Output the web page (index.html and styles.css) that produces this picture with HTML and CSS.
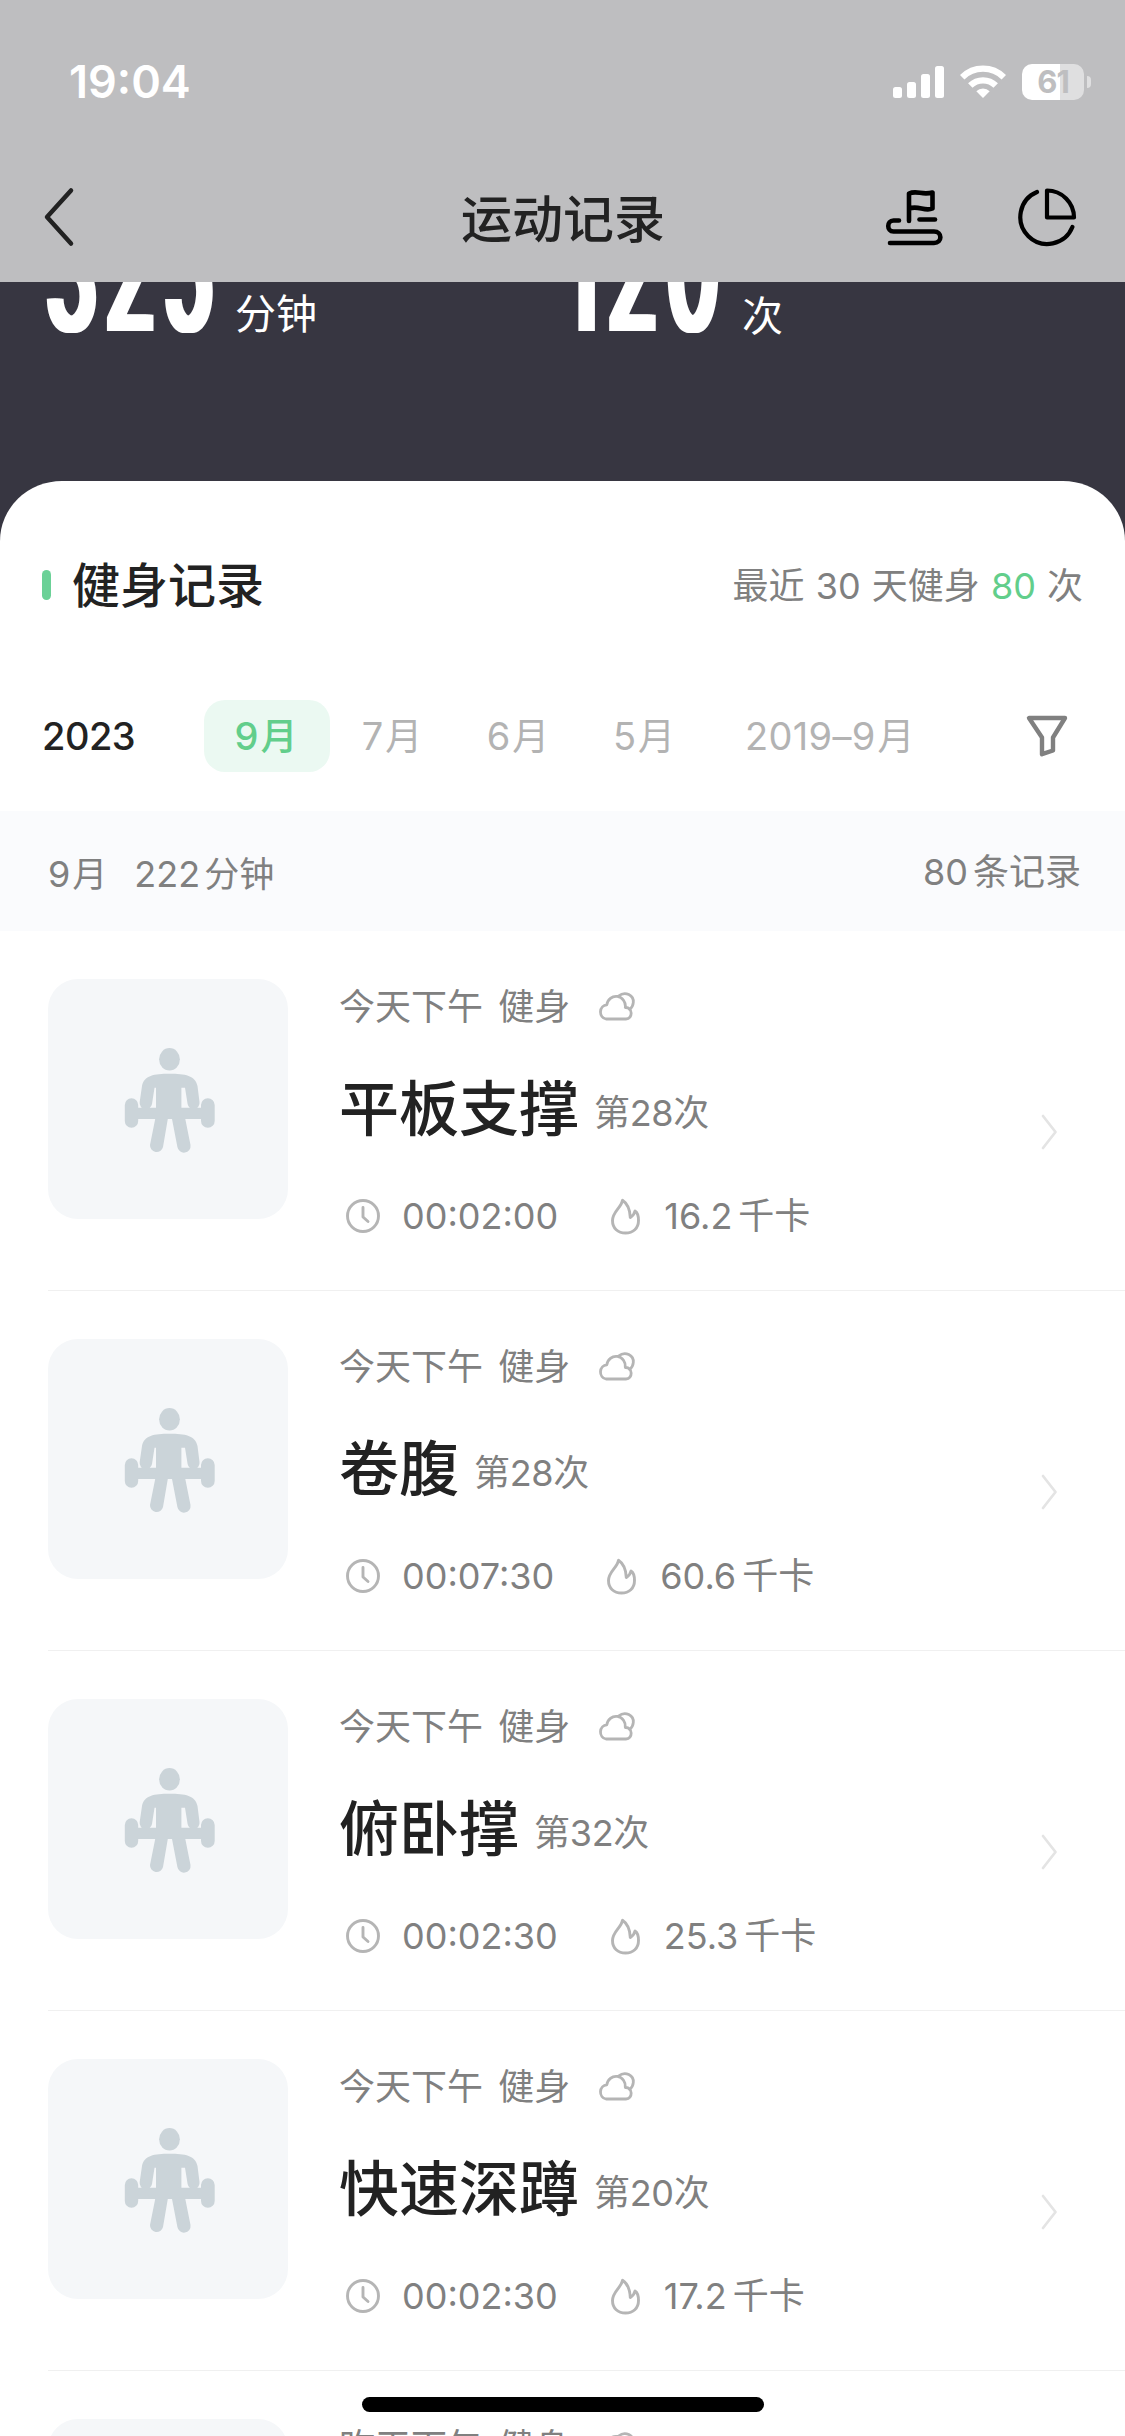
FILE: index.html
```html
<!DOCTYPE html>
<html lang="zh-CN">
<head>
<meta charset="utf-8">
<title>运动记录</title>
<link rel="stylesheet" href="styles.css">
</head>
<body>
<svg class="defs" aria-hidden="true">
  <symbol id="athlete" viewBox="0 0 240 240">
    <g fill="#cbd4d9">
      <ellipse cx="121.5" cy="80.3" rx="10.4" ry="11.2"/>
      <path d="M121.500 94.700C137 94.700 147.500 96.500 149.500 107L151.500 123A6 6 0 0 1 139.600 125L137 108.800H133.400V128.700H153V126A6.800 6.800 0 0 1 166.700 126V142A6.800 6.800 0 0 1 153 142V140H137.300L142.500 166A6.600 6.600 0 0 1 129.400 168L124 140H119.800L115 168A6.600 6.600 0 0 1 102 166L107.200 140H90.200V142A6.700 6.700 0 0 1 76.800 142V126A6.700 6.700 0 0 1 90.200 126V128.700H108V108.800H106.500L104 125A6.200 6.200 0 0 1 91.700 123L94 107C96 96.500 106 94.700 121.500 94.700Z"/>
    </g>
  </symbol>
  <symbol id="cloud" viewBox="0 0 42 36">
    <g fill="none" stroke="#b5b5b5" stroke-width="2.8" stroke-linecap="round" stroke-linejoin="round">
      <path d="M10 30A7 7.200 0 0 1 10.800 15.800A9.300 9.800 0 1 1 29.300 18.500C37 18 37 30 30 30Z"/>
      <path d="M22.500 7C29.500 1.500 38 6.500 37.300 13.500C37.100 16.500 35.500 19 33.500 20.300"/>
    </g>
  </symbol>
  <symbol id="clock" viewBox="0 0 36 36">
    <g fill="none" stroke="#b5b5b5" stroke-width="2.9" stroke-linecap="round" stroke-linejoin="round">
      <circle cx="18" cy="18" r="15.500"/>
      <path d="M18 9.500V19L23 23.500"/>
    </g>
  </symbol>
  <symbol id="flame" viewBox="0 0 36 42">
    <path d="M14.500 5.200C13.500 12.500 4.500 16.500 4.500 25.500C4.500 33.500 10 38 17.500 38S30.500 33.500 30.500 25.500C30.500 20.500 29.500 17.500 27 16C26.500 19 24.500 21 22.300 22.500C22 15 19.500 8.500 14.500 5.200Z" fill="none" stroke="#b5b5b5" stroke-width="2.900" stroke-linejoin="round"/>
  </symbol>
  <symbol id="chevron" viewBox="0 0 20 38">
    <path d="M4 3L16.500 19L4 35" fill="none" stroke="#e4e4e4" stroke-width="2.700" stroke-linecap="round" stroke-linejoin="round"/>
  </symbol>
</svg>

<div class="screen">
  <header class="topbar">
    <div class="status">
      <span class="status-time">19:04</span>
      <div class="status-icons">
        <svg class="signal" viewBox="0 0 51 36" fill="#fff">
          <rect x="0" y="23" width="9" height="11" rx="2.500"/>
          <rect x="14" y="18" width="9" height="16" rx="2.500"/>
          <rect x="28" y="10" width="9" height="24" rx="2.500"/>
          <rect x="42" y="2" width="9" height="32" rx="2.500"/>
        </svg>
        <svg class="wifi" viewBox="0 0 46 36">
          <g fill="none" stroke="#fff" stroke-width="6.300">
            <path d="M2.200 13.200A29.500 29.500 0 0 1 43.800 13.200"/>
            <path d="M10.300 21.600A18 18 0 0 1 35.700 21.600"/>
          </g>
          <path d="M23 34L16.300 27.300A9.600 9.600 0 0 1 29.700 27.300Z" fill="#fff"/>
        </svg>
        <div class="battery"><span class="battery-cell">61</span><i class="battery-tip"></i></div>
      </div>
    </div>
    <nav class="nav">
      <svg class="back" viewBox="0 0 36 60"><path d="M31 3.500L7 30L31 56.500" fill="none" stroke="#222" stroke-width="4.500" stroke-linecap="round" stroke-linejoin="round"/></svg>
      <h1 class="nav-title">运动记录</h1>
      <div class="nav-actions">
        <svg class="nav-icon" viewBox="0 0 60 60" fill="none" stroke="#000" stroke-width="4.600" stroke-linecap="round" stroke-linejoin="round">
          <path d="M25 33V5.500C33 2 38 7.500 48.500 4.500V20.500C41 24 34 17 25.500 20.500"/>
          <path d="M35.500 31.500H51"/>
          <path d="M15 32.500H9.500C2.500 32.500 2.500 43.500 9.500 43.500H50C58.500 43.500 58.500 55 50 55H6"/>
        </svg>
        <svg class="nav-icon" viewBox="0 0 60 60" fill="none" stroke="#000" stroke-width="4.200" stroke-linecap="round" stroke-linejoin="round">
          <path d="M20 4A27 27 0 1 0 55.400 39"/>
          <path d="M30 2.500V29.500H57A27 27 0 0 0 30 2.500Z"/>
        </svg>
      </div>
    </nav>
  </header>

  <section class="totals">
    <div class="total"><span class="total-num">325</span><span class="total-unit">分钟</span></div>
    <div class="total"><span class="total-num num-times">120</span><span class="total-unit unit-times">次</span></div>
  </section>

  <main class="sheet">
    <div class="section-head">
      <i class="marker"></i>
      <h2 class="section-title">健身记录</h2>
      <p class="recent">最近 30 天健身 <b>80</b> 次</p>
    </div>

    <div class="months">
      <span class="year">2023</span>
      <span class="month month-on">9<i>月</i></span>
      <span class="month">7<i>月</i></span>
      <span class="month">6<i>月</i></span>
      <span class="month">5<i>月</i></span>
      <span class="month month-wide">2019–9<i>月</i></span>
      <svg class="filter" viewBox="0 0 44 44"><path d="M4 4H40L28 23.500V36.500L17 40.200V23.500Z" fill="none" stroke="#808080" stroke-width="4.400" stroke-linejoin="round"/></svg>
    </div>

    <div class="summary">
      <p class="summary-left"><span class="summary-month">9<i>月</i></span><span>222<i>分钟</i></span></p>
      <p class="summary-right">80<i>条记录</i></p>
    </div>

    <ul class="records">
      <li class="record">
        <div class="thumb"><svg viewBox="0 0 240 240"><use href="#athlete"/></svg></div>
        <div class="info">
          <p class="when">今天下午 健身<svg class="cloud"><use href="#cloud"/></svg></p>
          <h3 class="name">平板支撑<small>第28次</small></h3>
          <p class="stats"><svg class="clock"><use href="#clock"/></svg><span class="time">00:02:00</span><svg class="flame"><use href="#flame"/></svg><span class="kcal">16.2<i>千卡</i></span></p>
        </div>
        <svg class="chevron"><use href="#chevron"/></svg>
      </li>
      <li class="record">
        <div class="thumb"><svg viewBox="0 0 240 240"><use href="#athlete"/></svg></div>
        <div class="info">
          <p class="when">今天下午 健身<svg class="cloud"><use href="#cloud"/></svg></p>
          <h3 class="name">卷腹<small>第28次</small></h3>
          <p class="stats"><svg class="clock"><use href="#clock"/></svg><span class="time">00:07:30</span><svg class="flame"><use href="#flame"/></svg><span class="kcal">60.6<i>千卡</i></span></p>
        </div>
        <svg class="chevron"><use href="#chevron"/></svg>
      </li>
      <li class="record">
        <div class="thumb"><svg viewBox="0 0 240 240"><use href="#athlete"/></svg></div>
        <div class="info">
          <p class="when">今天下午 健身<svg class="cloud"><use href="#cloud"/></svg></p>
          <h3 class="name">俯卧撑<small>第32次</small></h3>
          <p class="stats"><svg class="clock"><use href="#clock"/></svg><span class="time">00:02:30</span><svg class="flame"><use href="#flame"/></svg><span class="kcal">25.3<i>千卡</i></span></p>
        </div>
        <svg class="chevron"><use href="#chevron"/></svg>
      </li>
      <li class="record">
        <div class="thumb"><svg viewBox="0 0 240 240"><use href="#athlete"/></svg></div>
        <div class="info">
          <p class="when">今天下午 健身<svg class="cloud"><use href="#cloud"/></svg></p>
          <h3 class="name">快速深蹲<small>第20次</small></h3>
          <p class="stats"><svg class="clock"><use href="#clock"/></svg><span class="time">00:02:30</span><svg class="flame"><use href="#flame"/></svg><span class="kcal">17.2<i>千卡</i></span></p>
        </div>
        <svg class="chevron"><use href="#chevron"/></svg>
      </li>
      <li class="record">
        <div class="thumb"></div>
        <div class="info">
          <p class="when">昨天下午 健身<svg class="cloud"><use href="#cloud"/></svg></p>
        </div>
      </li>
    </ul>
  </main>
  <div class="home-bar"></div>
</div>
</body>
</html>
```
FILE: styles.css
```css
* { box-sizing: border-box; margin: 0; padding: 0; }
i { font-style: normal; }
svg { display: block; flex: none; }
.defs { position: absolute; width: 0; height: 0; }

body {
  font-family: Inter, "Noto Sans CJK SC", sans-serif;
  font-size: 36px;
  color: #808080;
  background: #fff;
}

.screen {
  position: relative;
  width: 1125px;
  height: 2436px;
  overflow: hidden;
  display: flex;
  flex-direction: column;
  background: #373641;
}

/* top bar */
.topbar {
  position: relative;
  z-index: 1;
  flex: none;
  height: 282px;
  background: #bebec0;
}
.status {
  display: flex;
  align-items: center;
  justify-content: space-between;
  height: 100px;
  margin-bottom: 50px;
  padding: 64px 34px 0 69px;
}
.status-time {
  font-size: 45px;
  font-weight: 600;
  line-height: 36px;
  color: #fff;
}
.status-icons { display: flex; align-items: center; }
.signal { width: 51px; height: 36px; margin-right: 16px; }
.wifi { width: 46px; height: 36px; margin-right: 16px; }
.battery { display: flex; align-items: center; gap: 3px; }
.battery-cell {
  width: 62px;
  height: 36px;
  border-radius: 10px;
  background: linear-gradient(90deg, #fff 38px, #dfdfe0 38px);
  color: #bebec0;
  font-size: 31px;
  font-weight: 700;
  line-height: 36px;
  letter-spacing: -1px;
  text-align: center;
}
.battery-tip { width: 4px; height: 12px; border-radius: 0 4px 4px 0; background: #dfdfe0; }
.nav {
  display: grid;
  grid-template-columns: 1fr auto 1fr;
  align-items: center;
  height: 132px;
  padding: 3px 48px 0 40px;
}
.back { width: 36px; height: 60px; margin-top: -2px; }
.nav-title { padding: 5px 0 0 9px; font-size: 51px; font-weight: 500; line-height: 60px; color: #222; }
.nav-actions { display: flex; gap: 73px; justify-content: flex-end; }
.nav-icon { width: 60px; height: 60px; }

/* totals, partly scrolled beneath the top bar */
.totals {
  flex: none;
  display: grid;
  grid-template-columns: 507px 1fr;
  height: 199px;
  padding-left: 45px;
  overflow: hidden;
}
.total { display: flex; align-items: baseline; height: 60px; margin-top: -103px; color: #fff; }
/* condensed numerals: narrowed, with the stems widened sideways only */
.total-num {
  width: 190px;
  font-size: 171px;
  font-weight: 550;
  line-height: 180px;
  letter-spacing: 17px;
  white-space: nowrap;
  text-shadow: -8px 0 #fff, -4px 0 #fff, 4px 0 #fff, 8px 0 #fff;
  transform: translateX(1px) scaleX(0.475);
  transform-origin: 0 50%;
}
.num-times { letter-spacing: 20px; transform: translateX(12px) scaleX(0.475); }
.total-unit { margin-bottom: 2px; font-size: 41px; line-height: 50px; transform: translateY(-2px); }
.unit-times { transform: none; }

/* sheet */
.sheet { flex: 1; min-height: 0; border-radius: 62px 62px 0 0 / 60px 60px 0 0; background: #fff; }
.section-head {
  display: flex;
  align-items: center;
  height: 208px;
  padding: 0 42px;
  line-height: 60px;
}
.marker { width: 9px; height: 30px; border-radius: 4.5px; background: #6bd197; }
.section-title { margin: 2px 0 0 21px; font-size: 48px; font-weight: 500; color: #222; }
.recent { margin: 2px 0 0 auto; word-spacing: 1px; }
.recent b { font-weight: 400; color: #62ce8b; }

.months {
  display: flex;
  align-items: center;
  height: 122px;
  padding: 11px 56px 39px 42px;
  font-size: 38px;
  color: #b3b3b3;
}
.year { width: 162px; font-weight: 500; letter-spacing: -0.5px; color: #222; }
.month {
  width: 126px;
  height: 72px;
  padding-right: 2px;
  border-radius: 21px;
  line-height: 72px;
  text-align: center;
}
.month i { margin-left: 2px; font-size: 37px; }
.month-on { background: #ebf9f2; color: #62ce8b; font-weight: 500; }
.month-wide { width: 246px; letter-spacing: 0.3px; }
.filter { width: 44px; height: 44px; margin-left: auto; }

.summary {
  display: flex;
  justify-content: space-between;
  height: 120px;
  padding: 0 44px 0 48px;
  background: #fafbfd;
}
.summary-left { display: flex; gap: 27px; line-height: 126px; }
.summary-right { line-height: 122px; }
.summary i { margin-left: 5px; }
.summary-left i { margin-left: 4px; font-size: 35px; }
.summary .summary-month i { margin-left: 2px; }

/* records */
.records { list-style: none; }
.record { display: flex; position: relative; height: 360px; padding: 48px 66px 0 48px; }
.record::after {
  content: "";
  position: absolute;
  left: 48px;
  right: 0;
  bottom: 0;
  height: 1px;
  background: #f0f0f0;
}
.thumb { flex: none; width: 240px; height: 240px; border-radius: 30px; background: #f5f7f9; }
.info { flex: 1; margin-left: 51px; }
.when { display: flex; align-items: center; height: 54px; padding-top: 1px; line-height: 56px; white-space: pre; word-spacing: 5px; }
.cloud { width: 42px; height: 36px; margin-left: 26px; }
.name {
  display: flex;
  align-items: center;
  height: 72px;
  margin-top: 40px;
  font-size: 60px;
  font-weight: 500;
  line-height: 72px;
  color: #222;
}
.name small { margin: 7px 0 0 15px; font-size: 36px; font-weight: 400; line-height: 44px; letter-spacing: -0.3px; color: #808080; }
.stats { display: flex; align-items: center; height: 36px; margin-top: 53px; padding-left: 6px; line-height: 36px; }
.clock { width: 36px; height: 36px; }
.time { margin-left: 21px; }
.flame { width: 36px; height: 42px; margin-left: 50px; }
.kcal { margin-left: 20px; }
.kcal i { margin-left: 6px; }
.chevron { width: 20px; height: 38px; margin-top: 134px; }

.home-bar {
  position: absolute;
  left: 362px;
  bottom: 24px;
  width: 402px;
  height: 15px;
  border-radius: 8px;
  background: #000;
}
```
